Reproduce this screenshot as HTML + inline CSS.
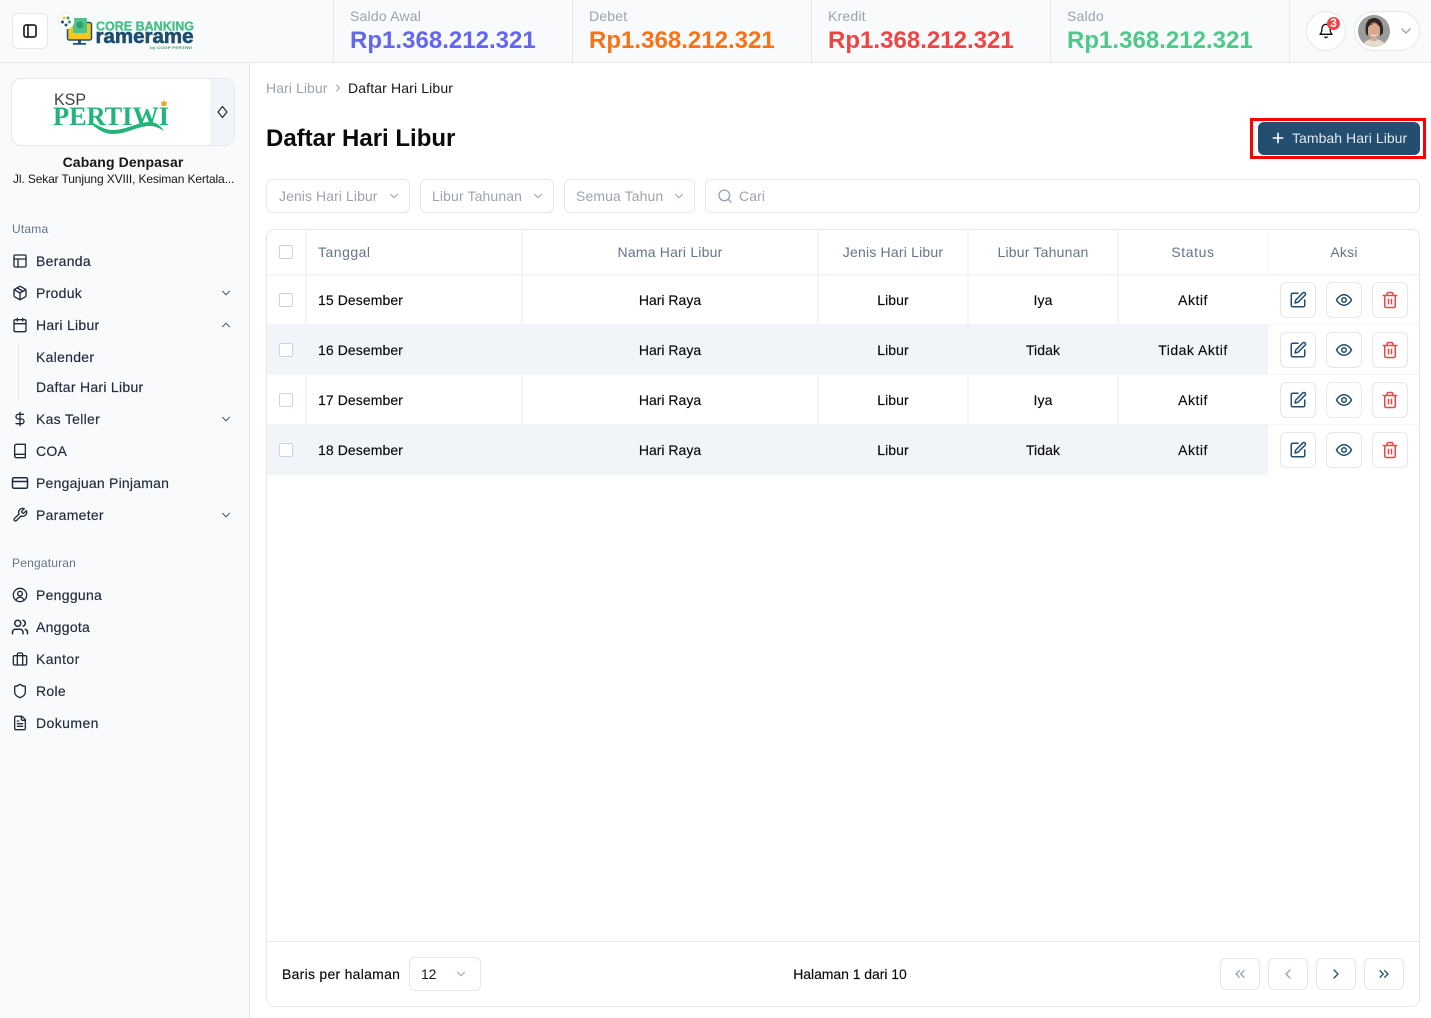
<!DOCTYPE html>
<html lang="id"><head><meta charset="utf-8"><title>Daftar Hari Libur</title>
<style>
*{box-sizing:border-box}
html,body{margin:0;padding:0}
body{width:1431px;height:1018px;position:relative;overflow:hidden;background:#fff;font-family:"Liberation Sans",sans-serif;font-size:14px;color:#000}
.a{position:absolute}
.t{position:absolute;white-space:nowrap;line-height:20px;letter-spacing:.2px}
.c{text-align:center;transform:translateX(-50%)}
.nav{color:#1e293b;font-size:14px;letter-spacing:.28px;-webkit-text-stroke:.15px #1e293b}
.sec{color:#64748b;font-size:12px;letter-spacing:.2px}
.ic{position:absolute;fill:none;stroke:currentColor;stroke-width:2;stroke-linecap:round;stroke-linejoin:round}
.lab{color:#9ca3af;font-size:14px;letter-spacing:.2px;top:6px}
.val{font-size:24px;font-weight:bold;top:26px;line-height:30px;letter-spacing:.02px}
.dv{position:absolute;top:0;width:1px;height:62px;background:#e5e7eb}
.bx{position:absolute;background:#fff;border:1px solid #e5e7eb;border-radius:6px}
.flt{color:#9ca3af;top:186px;letter-spacing:.1px}
.th{color:#64748b;top:242px;letter-spacing:.2px}
.td{font-size:14px;letter-spacing:.08px;color:#0a0a0a;-webkit-text-stroke:.15px #0a0a0a}
.cb{position:absolute;width:14px;height:14px;background:#fff;border:1.5px solid #cbd5e1;border-radius:2px;left:279px}
.b{position:absolute;width:36px;height:36px;background:#fff;border:1px solid #e5e7eb;border-radius:6px}
.b svg{position:absolute;width:18px;height:18px;left:8px;top:8px;fill:none;stroke-width:2;stroke-linecap:round;stroke-linejoin:round}
.p{position:absolute;top:958px;width:40px;height:32px;background:#fff;border:1px solid #e5e7eb;border-radius:6px}
.p svg{position:absolute;left:11px;top:7px;fill:none;stroke-width:2;stroke-linecap:round;stroke-linejoin:round}
</style></head><body>
<svg width="0" height="0" style="position:absolute">
<defs>
<symbol id="chev" viewBox="0 0 24 24"><path d="m6 9 6 6 6-6"/></symbol>
<symbol id="edit" viewBox="0 0 24 24"><path d="M12 3H5a2 2 0 0 0-2 2v14a2 2 0 0 0 2 2h14a2 2 0 0 0 2-2v-7"/><path d="M18.4 2.6a2.1 2.1 0 1 1 3 3L12 15l-4 1 1-4Z"/></symbol>
<symbol id="eye" viewBox="0 0 24 24"><path d="M2 12s3.6-7 10-7 10 7 10 7-3.6 7-10 7-10-7-10-7Z"/><circle cx="12" cy="12" r="3"/></symbol>
<symbol id="trash" viewBox="0 0 24 24"><path d="M3 6h18M19 6v14a2 2 0 0 1-2 2H7a2 2 0 0 1-2-2V6M8 6V4a2 2 0 0 1 2-2h4a2 2 0 0 1 2 2v2M10 11v6M14 11v6"/></symbol>
</defs></svg>

<!-- Header -->
<div class="a" style="left:0;top:0;width:1431px;height:63px;background:#f8fafc;border-bottom:1px solid #e5e7eb"></div>
<div class="bx" style="left:12px;top:13px;width:36px;height:36px"></div>
<svg class="ic" style="left:22px;top:23px;color:#262626" width="16" height="16" viewBox="0 0 24 24"><rect x="3" y="3" width="18" height="18" rx="3" stroke-width="2.600"/><path d="M9 3v18" stroke-width="2.600"/></svg>

<!-- top logo -->
<svg class="a" style="left:57px;top:12px" width="140" height="40" viewBox="0 0 140 40">
<rect x="10.500" y="10.500" width="24" height="17.500" rx="2" fill="#f4c81c" stroke="#23506f" stroke-width="1.500"/>
<rect x="16" y="6" width="14" height="15" rx="1" fill="#4cc38a"/>
<circle cx="23" cy="13" r="3.500" fill="#2f9e6e"/>
<path d="M21 28h3v4h-3zM16 31h13v1.800H16z" fill="#23506f"/>
<circle cx="9" cy="9" r="8" fill="#fff" stroke="#e5e7eb" stroke-width=".7"/>
<circle cx="7" cy="6" r="1.500" fill="#f4c81c"/><circle cx="11" cy="6" r="1.500" fill="#2f9e6e"/><circle cx="5.500" cy="10" r="1.500" fill="#23506f"/><circle cx="12.500" cy="10" r="1.500" fill="#2f9e6e"/><circle cx="9" cy="13" r="1.500" fill="#23506f"/>
<text x="39" y="18.500" font-family="Liberation Sans" font-weight="bold" font-size="13" fill="#42c083" stroke="#42c083" stroke-width=".35" textLength="98" lengthAdjust="spacingAndGlyphs">CORE BANKING</text>
<text x="38.500" y="31" font-family="Liberation Sans" font-weight="bold" font-size="20" fill="#1e4e6e" stroke="#1e4e6e" stroke-width=".6" textLength="98" lengthAdjust="spacingAndGlyphs">ramerame</text>
<text x="93" y="37" font-family="Liberation Sans" font-weight="bold" font-size="4" fill="#42a070" textLength="42" lengthAdjust="spacingAndGlyphs">by COOP PERTIWI</text>
</svg>

<!-- Stats -->
<div class="dv" style="left:333px"></div><div class="dv" style="left:572px"></div><div class="dv" style="left:811px"></div><div class="dv" style="left:1050px"></div><div class="dv" style="left:1289px"></div>
<div class="t lab" style="left:350px">Saldo Awal</div><div class="t val" style="left:350px;color:#6366f1">Rp1.368.212.321</div>
<div class="t lab" style="left:589px">Debet</div><div class="t val" style="left:589px;color:#f97316">Rp1.368.212.321</div>
<div class="t lab" style="left:828px">Kredit</div><div class="t val" style="left:828px;color:#ef4444">Rp1.368.212.321</div>
<div class="t lab" style="left:1067px">Saldo</div><div class="t val" style="left:1067px;color:#4fc98a">Rp1.368.212.321</div>

<!-- bell + profile -->
<div class="a" style="left:1306px;top:11px;width:40px;height:40px;border-radius:50%;background:#fff;border:1px solid #e5e7eb"></div>
<svg class="ic" style="left:1318px;top:23px;color:#0a0a0a" width="16" height="16" viewBox="0 0 24 24"><path d="M6 8a6 6 0 0 1 12 0c0 7 3 9 3 9H3s3-2 3-9"/><path d="M10.300 21a2 2 0 0 0 3.400 0"/></svg>
<div class="a" style="left:1327px;top:17px;width:13px;height:13px;border-radius:50%;background:#ef4444;color:#fff;font-size:12px;font-weight:bold;line-height:13px;text-align:center">3</div>
<div class="a" style="left:1354px;top:11px;width:66px;height:40px;border-radius:20px;background:#fff;border:1px solid #e5e7eb"></div>
<svg class="a" style="left:1358px;top:15px" width="32" height="32" viewBox="0 0 32 32">
<clipPath id="av"><circle cx="16" cy="16" r="16"/></clipPath>
<g clip-path="url(#av)"><rect width="32" height="32" fill="#9a9c9b"/>
<path d="M5 32c0-6 6-8 11-8s11 2 11 8z" fill="#e3dccb"/>
<path d="M8 19C6 7 11 3 16 3s10 4 9 15l-3 3V12H10v9z" fill="#2f2622"/>
<ellipse cx="16" cy="15.500" rx="6" ry="8" fill="#d9a98e"/>
<path d="M9.500 12c2-4 9-5 13 0-2-3-4-4-7-3-2 .5-4 1-6 3z" fill="#2f2622"/>
<path d="M12.500 19c2 1.500 5 1.500 7 0-1 2.500-6 2.500-7 0z" fill="#fff"/>
<rect x="13.500" y="22" width="5" height="4" fill="#d9a98e"/></g></svg>
<svg class="ic" style="left:1398px;top:23px;color:#94a3b8" width="16" height="16" viewBox="0 0 24 24"><use href="#chev"/></svg>

<!-- Sidebar -->
<div class="a" style="left:0;top:63px;width:250px;height:955px;background:#f8fafc;border-right:1px solid #e5e7eb"></div>
<div class="a" style="left:11px;top:78px;width:224px;height:68px;background:#fff;border:1px solid #e5e7eb;border-radius:10px;overflow:hidden"><div class="a" style="left:198px;top:0;width:26px;height:66px;background:#f1f5f9"></div></div>
<svg class="ic" style="left:216px;top:105px;color:#262626;stroke-width:1.200" width="13" height="14" viewBox="0 0 13 14"><path d="M6.500 1.500 11 7l-4.500 5.500L2 7z"/></svg>
<svg class="a" style="left:50px;top:88px" width="125" height="50" viewBox="0 0 125 50">
<text x="4" y="17" font-family="Liberation Sans" font-size="17" fill="#3f3f46" textLength="32" lengthAdjust="spacingAndGlyphs">KSP</text>
<text x="3" y="37" font-family="Liberation Serif" font-weight="bold" font-size="26" fill="#22b57a" textLength="116" lengthAdjust="spacingAndGlyphs">PERTIWI</text>
<path d="M38 33c9 3 15 9 25 9 14 0 24-8 37-8 6 0 11 4 14 9-5-3-9-5-14-5-12 0-24 8-37 8-11 0-18-7-25-13z" fill="#22b57a"/>
<path d="M111 13l1.500 1.500L114 12l1.500 2.500L117 13l-.8 5h-4.400z" fill="#f59e2c"/>
</svg>
<div class="t c" style="left:123px;top:152px;font-weight:bold;color:#171717;letter-spacing:.12px">Cabang Denpasar</div>
<div class="t" style="left:13px;top:169px;font-size:12px;color:#171717;letter-spacing:-.13px">Jl. Sekar Tunjung XVIII, Kesiman Kertala...</div>

<div class="t sec" style="left:12px;top:219px">Utama</div>
<svg class="ic" style="left:12px;top:253px;color:#1e293b" width="16" height="16" viewBox="0 0 24 24"><rect x="3" y="3" width="18" height="18" rx="2"/><path d="M3 9h18M9 21V9"/></svg>
<div class="t nav" style="left:36px;top:251px">Beranda</div>
<svg class="ic" style="left:12px;top:285px;color:#1e293b" width="16" height="16" viewBox="0 0 24 24"><path d="M11 21.700a2 2 0 0 0 2 0l7-4A2 2 0 0 0 21 16V8a2 2 0 0 0-1-1.700l-7-4a2 2 0 0 0-2 0l-7 4A2 2 0 0 0 3 8v8a2 2 0 0 0 1 1.700z"/><path d="M12 22V12M3.300 7 12 12l8.700-5M7.500 4.300l9 5.100"/></svg>
<div class="t nav" style="left:36px;top:283px">Produk</div>
<svg class="ic" style="left:219px;top:286px;color:#475569;stroke-width:1.800" width="14" height="14" viewBox="0 0 24 24"><use href="#chev"/></svg>
<svg class="ic" style="left:12px;top:317px;color:#1e293b" width="16" height="16" viewBox="0 0 24 24"><rect x="3" y="4" width="18" height="18" rx="2"/><path d="M16 2v4M8 2v4M3 10h18"/></svg>
<div class="t nav" style="left:36px;top:315px">Hari Libur</div>
<svg class="ic" style="left:219px;top:318px;color:#475569;stroke-width:1.800" width="14" height="14" viewBox="0 0 24 24"><path d="m18 15-6-6-6 6"/></svg>
<div class="a" style="left:18px;top:343px;width:1px;height:58px;background:#e2e8f0"></div>
<div class="t nav" style="left:36px;top:347px">Kalender</div>
<div class="t nav" style="left:36px;top:377px">Daftar Hari Libur</div>
<svg class="ic" style="left:12px;top:411px;color:#1e293b" width="16" height="16" viewBox="0 0 24 24"><path d="M12 2v20M17 5H9.500a3.500 3.500 0 0 0 0 7h5a3.500 3.500 0 0 1 0 7H6"/></svg>
<div class="t nav" style="left:36px;top:409px">Kas Teller</div>
<svg class="ic" style="left:219px;top:412px;color:#475569;stroke-width:1.800" width="14" height="14" viewBox="0 0 24 24"><use href="#chev"/></svg>
<svg class="ic" style="left:12px;top:443px;color:#1e293b" width="16" height="16" viewBox="0 0 24 24"><path d="M4 19.500v-15A2.500 2.500 0 0 1 6.500 2H20v20H6.500a2.500 2.500 0 0 1 0-5H20"/></svg>
<div class="t nav" style="left:36px;top:441px">COA</div>
<svg class="ic" style="left:11px;top:474px;color:#1e293b" width="18" height="18" viewBox="0 0 24 24"><rect x="2" y="5" width="20" height="14" rx="2"/><path d="M2 10h20"/></svg>
<div class="t nav" style="left:36px;top:473px;letter-spacing:.22px">Pengajuan Pinjaman</div>
<svg class="ic" style="left:12px;top:507px;color:#1e293b" width="16" height="16" viewBox="0 0 24 24"><path d="M14.700 6.300a1 1 0 0 0 0 1.400l1.600 1.600a1 1 0 0 0 1.400 0l3.770-3.770a6 6 0 0 1-7.940 7.940l-6.910 6.910a2.120 2.120 0 0 1-3-3l6.910-6.910a6 6 0 0 1 7.940-7.940z"/></svg>
<div class="t nav" style="left:36px;top:505px">Parameter</div>
<svg class="ic" style="left:219px;top:508px;color:#475569;stroke-width:1.800" width="14" height="14" viewBox="0 0 24 24"><use href="#chev"/></svg>

<div class="t sec" style="left:12px;top:553px">Pengaturan</div>
<svg class="ic" style="left:12px;top:587px;color:#1e293b" width="16" height="16" viewBox="0 0 24 24"><circle cx="12" cy="12" r="10"/><circle cx="12" cy="10" r="3.500"/><path d="M6.500 19a6 6 0 0 1 11 0"/></svg>
<div class="t nav" style="left:36px;top:585px">Pengguna</div>
<svg class="ic" style="left:11px;top:618px;color:#1e293b" width="18" height="18" viewBox="0 0 24 24"><path d="M16 21v-2a4 4 0 0 0-4-4H6a4 4 0 0 0-4 4v2"/><circle cx="9" cy="7" r="4"/><path d="M22 21v-2a4 4 0 0 0-3-3.870M16 3.130a4 4 0 0 1 0 7.750"/></svg>
<div class="t nav" style="left:36px;top:617px">Anggota</div>
<svg class="ic" style="left:12px;top:651px;color:#1e293b" width="16" height="16" viewBox="0 0 24 24"><rect x="2" y="7" width="20" height="14" rx="2"/><path d="M16 21V5a2 2 0 0 0-2-2h-4a2 2 0 0 0-2 2v16"/></svg>
<div class="t nav" style="left:36px;top:649px;letter-spacing:.4px">Kantor</div>
<svg class="ic" style="left:12px;top:683px;color:#1e293b" width="16" height="16" viewBox="0 0 24 24"><path d="M20 13c0 5-3.500 7.500-7.660 8.950a1 1 0 0 1-.67 0C7.500 20.500 4 18 4 13V6a1 1 0 0 1 1-1c2 0 4.500-1.200 6.240-2.720a1.170 1.170 0 0 1 1.520 0C14.510 3.810 17 5 19 5a1 1 0 0 1 1 1z"/></svg>
<div class="t nav" style="left:36px;top:681px">Role</div>
<svg class="ic" style="left:12px;top:715px;color:#1e293b" width="16" height="16" viewBox="0 0 24 24"><path d="M15 2H6a2 2 0 0 0-2 2v16a2 2 0 0 0 2 2h12a2 2 0 0 0 2-2V7z"/><path d="M14 2v4a2 2 0 0 0 2 2h4M10 9H8M16 13H8M16 17H8"/></svg>
<div class="t nav" style="left:36px;top:713px;letter-spacing:.42px">Dokumen</div>

<!-- Main head -->
<div class="t" style="left:266px;top:78px;color:#9ca3af;letter-spacing:.08px">Hari Libur</div>
<svg class="ic" style="left:332px;top:82px;color:#9ca3af;stroke-width:1.800" width="12" height="12" viewBox="0 0 24 24"><path d="m9 18 6-6-6-6"/></svg>
<div class="t" style="left:348px;top:78px;color:#171717;letter-spacing:.14px">Daftar Hari Libur</div>
<div class="t" style="left:266px;top:124px;font-size:24px;line-height:30px;font-weight:bold;color:#0a0a0a;letter-spacing:0">Daftar Hari Libur</div>

<div class="a" style="left:1250px;top:118px;width:176px;height:41px;border:3px solid #f00"></div>
<div class="a" style="left:1258px;top:122px;width:162px;height:33px;background:#234e70;border-radius:6px"></div>
<svg class="ic" style="left:1270px;top:130px;color:#fff" width="16" height="16" viewBox="0 0 24 24"><path d="M5 12h14M12 5v14" stroke-width="2.400"/></svg>
<div class="t" style="left:1292px;top:128px;color:#e2e8f0;letter-spacing:.05px">Tambah Hari Libur</div>

<!-- Filters -->
<div class="bx" style="left:266px;top:179px;width:144px;height:34px"></div>
<div class="t flt" style="left:279px;letter-spacing:.08px">Jenis Hari Libur</div>
<svg class="ic" style="left:387px;top:189px;color:#94a3b8;stroke-width:1.800" width="14" height="14" viewBox="0 0 24 24"><use href="#chev"/></svg>
<div class="bx" style="left:420px;top:179px;width:134px;height:34px"></div>
<div class="t flt" style="left:432px;letter-spacing:.12px">Libur Tahunan</div>
<svg class="ic" style="left:531px;top:189px;color:#94a3b8;stroke-width:1.800" width="14" height="14" viewBox="0 0 24 24"><use href="#chev"/></svg>
<div class="bx" style="left:564px;top:179px;width:131px;height:34px"></div>
<div class="t flt" style="left:576px">Semua Tahun</div>
<svg class="ic" style="left:672px;top:189px;color:#94a3b8;stroke-width:1.800" width="14" height="14" viewBox="0 0 24 24"><use href="#chev"/></svg>
<div class="bx" style="left:705px;top:179px;width:715px;height:34px"></div>
<svg class="ic" style="left:717px;top:188px;color:#94a3b8" width="16" height="16" viewBox="0 0 24 24"><circle cx="11" cy="11" r="8"/><path d="m21 21-4.300-4.300"/></svg>
<div class="t flt" style="left:739px">Cari</div>

<!-- Table -->
<div class="a" style="left:266px;top:229px;width:1154px;height:778px;background:#fff;border:1px solid #e5e7eb;border-radius:8px"></div>
<div class="a" style="left:267px;top:325px;width:1001px;height:50px;background:#f1f5f9"></div>
<div class="a" style="left:267px;top:425px;width:1001px;height:50px;background:#f1f5f9"></div>
<div class="a" style="left:267px;top:274px;width:1152px;height:2px;background:#f1f5f9"></div>
<div class="a" style="left:267px;top:324px;width:1152px;height:1px;background:#f1f5f9"></div>
<div class="a" style="left:267px;top:374px;width:1152px;height:1px;background:#f1f5f9"></div>
<div class="a" style="left:267px;top:424px;width:1152px;height:1px;background:#f1f5f9"></div>
<div class="a" style="left:305px;top:230px;width:2px;height:245px;background:#f1f5f9"></div>
<div class="a" style="left:521px;top:230px;width:2px;height:245px;background:#f1f5f9"></div>
<div class="a" style="left:817px;top:230px;width:2px;height:245px;background:#f1f5f9"></div>
<div class="a" style="left:967px;top:230px;width:2px;height:245px;background:#f1f5f9"></div>
<div class="a" style="left:1117px;top:230px;width:2px;height:245px;background:#f1f5f9"></div>
<div class="a" style="left:1268px;top:230px;width:1px;height:45px;background:#f1f5f9"></div>
<div class="a" style="left:267px;top:941px;width:1152px;height:1px;background:#e5e7eb"></div>

<div class="cb" style="top:245px"></div>
<div class="t th" style="left:318px;letter-spacing:.5px">Tanggal</div>
<div class="t th c" style="left:670px">Nama Hari Libur</div>
<div class="t th c" style="left:893px">Jenis Hari Libur</div>
<div class="t th c" style="left:1043px">Libur Tahunan</div>
<div class="t th c" style="left:1193px;letter-spacing:.6px">Status</div>
<div class="t th c" style="left:1344px">Aksi</div>

<!-- Row 1 -->
<div class="cb" style="top:293px"></div>
<div class="t td" style="left:318px;top:290px">15 Desember</div>
<div class="t td c" style="left:670px;top:290px;letter-spacing:0">Hari Raya</div>
<div class="t td c" style="left:893px;top:290px">Libur</div>
<div class="t td c" style="left:1043px;top:290px">Iya</div>
<div class="t td c" style="left:1193px;top:290px;letter-spacing:.5px">Aktif</div>
<div class="b" style="left:1280px;top:282px"><svg viewBox="0 0 24 24" stroke="#234e70"><use href="#edit"/></svg></div>
<div class="b" style="left:1326px;top:282px"><svg viewBox="0 0 24 24" stroke="#234e70"><use href="#eye"/></svg></div>
<div class="b" style="left:1372px;top:282px"><svg viewBox="0 0 24 24" stroke="#ef4444"><use href="#trash"/></svg></div>
<!-- Row 2 -->
<div class="cb" style="top:343px"></div>
<div class="t td" style="left:318px;top:340px">16 Desember</div>
<div class="t td c" style="left:670px;top:340px;letter-spacing:0">Hari Raya</div>
<div class="t td c" style="left:893px;top:340px">Libur</div>
<div class="t td c" style="left:1043px;top:340px">Tidak</div>
<div class="t td c" style="left:1193px;top:340px;letter-spacing:.5px">Tidak Aktif</div>
<div class="b" style="left:1280px;top:332px"><svg viewBox="0 0 24 24" stroke="#234e70"><use href="#edit"/></svg></div>
<div class="b" style="left:1326px;top:332px"><svg viewBox="0 0 24 24" stroke="#234e70"><use href="#eye"/></svg></div>
<div class="b" style="left:1372px;top:332px"><svg viewBox="0 0 24 24" stroke="#ef4444"><use href="#trash"/></svg></div>
<!-- Row 3 -->
<div class="cb" style="top:393px"></div>
<div class="t td" style="left:318px;top:390px">17 Desember</div>
<div class="t td c" style="left:670px;top:390px;letter-spacing:0">Hari Raya</div>
<div class="t td c" style="left:893px;top:390px">Libur</div>
<div class="t td c" style="left:1043px;top:390px">Iya</div>
<div class="t td c" style="left:1193px;top:390px;letter-spacing:.5px">Aktif</div>
<div class="b" style="left:1280px;top:382px"><svg viewBox="0 0 24 24" stroke="#234e70"><use href="#edit"/></svg></div>
<div class="b" style="left:1326px;top:382px"><svg viewBox="0 0 24 24" stroke="#234e70"><use href="#eye"/></svg></div>
<div class="b" style="left:1372px;top:382px"><svg viewBox="0 0 24 24" stroke="#ef4444"><use href="#trash"/></svg></div>
<!-- Row 4 -->
<div class="cb" style="top:443px"></div>
<div class="t td" style="left:318px;top:440px">18 Desember</div>
<div class="t td c" style="left:670px;top:440px;letter-spacing:0">Hari Raya</div>
<div class="t td c" style="left:893px;top:440px">Libur</div>
<div class="t td c" style="left:1043px;top:440px">Tidak</div>
<div class="t td c" style="left:1193px;top:440px;letter-spacing:.5px">Aktif</div>
<div class="b" style="left:1280px;top:432px"><svg viewBox="0 0 24 24" stroke="#234e70"><use href="#edit"/></svg></div>
<div class="b" style="left:1326px;top:432px"><svg viewBox="0 0 24 24" stroke="#234e70"><use href="#eye"/></svg></div>
<div class="b" style="left:1372px;top:432px"><svg viewBox="0 0 24 24" stroke="#ef4444"><use href="#trash"/></svg></div>

<!-- Footer -->
<div class="t" style="left:282px;top:964px;color:#0a0a0a;letter-spacing:.27px;-webkit-text-stroke:.15px #0a0a0a">Baris per halaman</div>
<div class="bx" style="left:409px;top:957px;width:72px;height:34px"></div>
<div class="t" style="left:421px;top:964px;color:#171717;letter-spacing:-.2px">12</div>
<svg class="ic" style="left:454px;top:967px;color:#94a3b8;stroke-width:1.800" width="14" height="14" viewBox="0 0 24 24"><use href="#chev"/></svg>
<div class="t c" style="left:850px;top:964px;color:#0a0a0a;letter-spacing:-.05px;-webkit-text-stroke:.15px #0a0a0a">Halaman 1 dari 10</div>

<div class="p" style="left:1220px"><svg width="16" height="16" viewBox="0 0 24 24" stroke="#94a3b8"><path d="m11 17-5-5 5-5M18 17l-5-5 5-5"/></svg></div>
<div class="p" style="left:1268px"><svg width="16" height="16" viewBox="0 0 24 24" stroke="#94a3b8"><path d="m15 18-6-6 6-6"/></svg></div>
<div class="p" style="left:1316px"><svg width="16" height="16" viewBox="0 0 24 24" stroke="#234e70"><path d="m9 18 6-6-6-6"/></svg></div>
<div class="p" style="left:1364px"><svg width="16" height="16" viewBox="0 0 24 24" stroke="#234e70"><path d="m6 17 5-5-5-5M13 17l5-5-5-5"/></svg></div>
</body></html>
